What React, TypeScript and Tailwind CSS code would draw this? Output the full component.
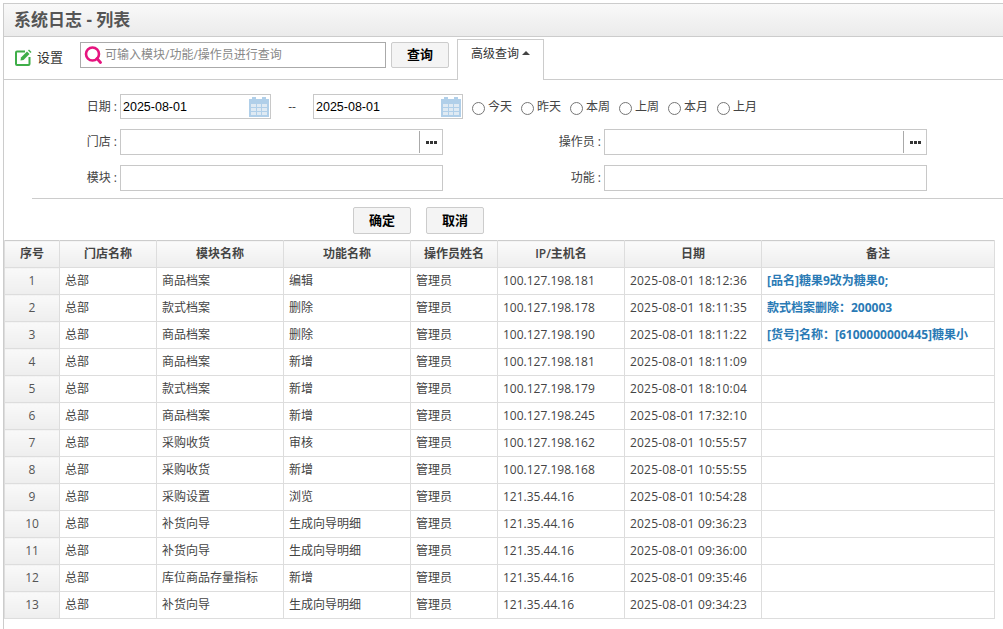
import React from "react";

const rows = [
  ["总部", "商品档案", "编辑", "管理员", "100.127.198.181", "2025-08-01 18:12:36", "[品名]糖果9改为糖果0;"],
  ["总部", "款式档案", "删除", "管理员", "100.127.198.178", "2025-08-01 18:11:35", "款式档案删除：200003"],
  ["总部", "商品档案", "删除", "管理员", "100.127.198.190", "2025-08-01 18:11:22", "[货号]名称：[6100000000445]糖果小"],
  ["总部", "商品档案", "新增", "管理员", "100.127.198.181", "2025-08-01 18:11:09", ""],
  ["总部", "款式档案", "新增", "管理员", "100.127.198.179", "2025-08-01 18:10:04", ""],
  ["总部", "商品档案", "新增", "管理员", "100.127.198.245", "2025-08-01 17:32:10", ""],
  ["总部", "采购收货", "审核", "管理员", "100.127.198.162", "2025-08-01 10:55:57", ""],
  ["总部", "采购收货", "新增", "管理员", "100.127.198.168", "2025-08-01 10:55:55", ""],
  ["总部", "采购设置", "浏览", "管理员", "121.35.44.16", "2025-08-01 10:54:28", ""],
  ["总部", "补货向导", "生成向导明细", "管理员", "121.35.44.16", "2025-08-01 09:36:23", ""],
  ["总部", "补货向导", "生成向导明细", "管理员", "121.35.44.16", "2025-08-01 09:36:00", ""],
  ["总部", "库位商品存量指标", "新增", "管理员", "121.35.44.16", "2025-08-01 09:35:46", ""],
  ["总部", "补货向导", "生成向导明细", "管理员", "121.35.44.16", "2025-08-01 09:34:23", ""],
];

const headers = ["序号", "门店名称", "模块名称", "功能名称", "操作员姓名", "IP/主机名", "日期", "备注"];
const widths = [55, 97, 127, 127, 87, 127, 137, 233];
const ranges = ["今天", "昨天", "本周", "上周", "本月", "上月"];

const CalendarIcon = () => (
  <svg width="20" height="20" viewBox="0 0 20 20" className="shrink-0">
    <rect x="0" y="2" width="20" height="18" fill="#b0cfe9" />
    <rect x="3" y="0" width="4" height="4" fill="#b0cfe9" />
    <rect x="13" y="0" width="4" height="4" fill="#b0cfe9" />
    <rect x="2" y="7" width="16" height="11" fill="#dfeaf3" />
    <path d="M7.5 7v11M12.5 7v11M2 10.5h16M2 14.5h16" stroke="#b0cfe9" strokeWidth="1" />
  </svg>
);

const DateField = ({ width }: { width: string }) => (
  <div className={`flex h-[25px] items-center border border-[#c8c8c8] pl-[2px] pr-[1px] ${width}`}>
    <input
      defaultValue="2025-08-01"
      className="w-0 flex-1 pt-[1px] font-['Liberation_Sans'] text-[12.5px] text-black outline-none"
    />
    <CalendarIcon />
  </div>
);

const Lookup = () => (
  <div className="flex h-[26px] w-[323px] border border-[#c8c8c8]">
    <input className="w-0 flex-1 outline-none" />
    <div className="my-[1px] flex w-[23px] items-center justify-center gap-[1px] border-l border-[#aaa]">
      <span className="h-[3px] w-[3px] bg-[#333]" />
      <span className="h-[3px] w-[3px] bg-[#333]" />
      <span className="h-[3px] w-[3px] bg-[#333]" />
    </div>
  </div>
);

const Btn = ({ children, className }: { children: React.ReactNode; className: string }) => (
  <button className={`flex items-center justify-center rounded-[2px] border border-[#ccc] bg-[#f4f4f4] text-[13px] font-bold text-black ${className}`}>
    {children}
  </button>
);

const FieldLabel = ({ children, className }: { children: React.ReactNode; className: string }) => (
  <label className={`pr-[3px] text-right text-[12px] text-[#444] ${className}`}>
    {children}
    <span className="pl-[3px]">:</span>
  </label>
);

export default function App() {
  return (
    <div className="h-[629px] w-[1003px] overflow-hidden bg-white pl-[3px] pt-[3px] font-['Open_Sans','Noto_Sans_CJK_SC',sans-serif] text-[12px] text-[#444]">
      <div className="h-full border-l border-t border-[#ccc]">
        <div className="flex h-[33px] items-center border-b border-[#ccc] bg-gradient-to-b from-[#f9f9f9] to-[#ebebeb] pl-[10px] text-[17px] font-bold text-[#555]">
          系统日志 - 列表
        </div>

        <div className="flex h-[43px] border-b border-[#ccc]">
          <div className="flex items-center pb-[1px] pl-[11px]">
            <svg width="17" height="17" viewBox="0 0 17 17" fill="none">
              <path d="M10 2.5H2a1 1 0 0 0-1 1V15a1 1 0 0 0 1 1h11.5a1 1 0 0 0 1-1V8" stroke="#3fae49" strokeWidth="2" />
              <path d="M5.5 11.5 6 8.5l6-6 2.5 2.5-6 6z" fill="#3fae49" />
              <path d="M13 1.5l1-1 2.5 2.5-1 1z" fill="#3fae49" />
            </svg>
            <span className="ml-[5px] text-[13px] text-[#333]">设置</span>
          </div>
          <div className="ml-[17px] mt-[5px] flex h-[26px] w-[306px] items-center border border-[#aaa] pl-[3px]">
            <svg width="18" height="18" viewBox="0 0 18 18" fill="none" className="shrink-0">
              <circle cx="8.5" cy="8" r="6.5" stroke="#e6147f" strokeWidth="2.6" />
              <path d="M13 12.5 16.5 16.5" stroke="#e6147f" strokeWidth="2.8" strokeLinecap="round" />
            </svg>
            <input
              placeholder="可输入模块/功能/操作员进行查询"
              className="ml-[3px] w-0 flex-1 text-[12px] outline-none placeholder:text-[#888]"
            />
          </div>
          <Btn className="ml-[5px] mt-[5px] h-[26px] w-[58px]">查询</Btn>
          <div className="z-10 ml-[8px] mt-[2px] flex h-[41px] w-[87px] items-start justify-center border-x border-t border-[#ccc] bg-white pt-[5px] text-[12px] text-[#333]">
            高级查询
            <span className="ml-[3px] mt-[6px] h-0 w-0 border-x-[4px] border-b-[4px] border-x-transparent border-b-[#444]" />
          </div>
        </div>

        <div className="flex h-[160px] flex-col pt-[14px]">
          <div className="flex h-[25px] items-center">
            <FieldLabel className="w-[116px]">日期</FieldLabel>
            <DateField width="w-[151px]" />
            <span className="w-[42px] text-center text-[12px]">--</span>
            <DateField width="w-[150px]" />
            <div className="ml-[9px] flex items-center gap-[9px]">
              {ranges.map((r) => (
                <label key={r} className="flex items-center gap-[3px]">
                  <input type="radio" name="range" className="m-0 mt-[3px] h-[13px] w-[13px]" />
                  <span className="text-[12px]">{r}</span>
                </label>
              ))}
            </div>
          </div>
          <div className="mt-[10px] flex h-[26px] items-center">
            <FieldLabel className="w-[116px]">门店</FieldLabel>
            <Lookup />
            <FieldLabel className="w-[161px]">操作员</FieldLabel>
            <Lookup />
          </div>
          <div className="mt-[10px] flex h-[26px] items-center">
            <FieldLabel className="w-[116px]">模块</FieldLabel>
            <input className="h-[26px] w-[323px] border border-[#c8c8c8] outline-none" />
            <FieldLabel className="w-[161px]">功能</FieldLabel>
            <input className="h-[26px] w-[323px] border border-[#c8c8c8] outline-none" />
          </div>
          <div className="ml-[28px] mt-[7px] border-t border-[#ccc]" />
          <div className="ml-[349px] mt-[8px] flex gap-[15px]">
            <Btn className="h-[27px] w-[58px] pt-[1px]">确定</Btn>
            <Btn className="h-[27px] w-[58px] pt-[1px]">取消</Btn>
          </div>
        </div>

        <table className="table-fixed border-collapse border-y border-[#ccc] text-[12px]" style={{ width: 990 }}>
          <colgroup>
            {widths.map((w, i) => (
              <col key={i} style={{ width: w }} />
            ))}
          </colgroup>
          <thead>
            <tr className="h-[27px]">
              {headers.map((h) => (
                <th key={h} className="border-x border-b border-[#ddd] bg-gradient-to-b from-[#fbfbfb] to-[#eeeeee] p-0 text-center font-semibold text-[#444]">
                  {h}
                </th>
              ))}
            </tr>
          </thead>
          <tbody>
            {rows.map((r, i) => (
              <tr key={i} className="h-[27px]">
                <td className="border border-[#ddd] bg-gradient-to-b from-[#f9f9f9] to-[#eeeeee] p-0 text-center text-[#555]">{i + 1}</td>
                {r.map((c, j) => (
                  <td
                    key={j}
                    className={
                      j === 6
                        ? "truncate border border-[#ddd] px-[5px] py-0 font-bold text-[#2a7ab5]"
                        : j === 5
                          ? "truncate border border-[#ddd] px-[5px] py-0 tracking-[0.2px] text-[#444]"
                          : "truncate border border-[#ddd] px-[5px] py-0 text-[#444]"
                    }
                  >
                    {c}
                  </td>
                ))}
              </tr>
            ))}
          </tbody>
        </table>
      </div>
    </div>
  );
}
